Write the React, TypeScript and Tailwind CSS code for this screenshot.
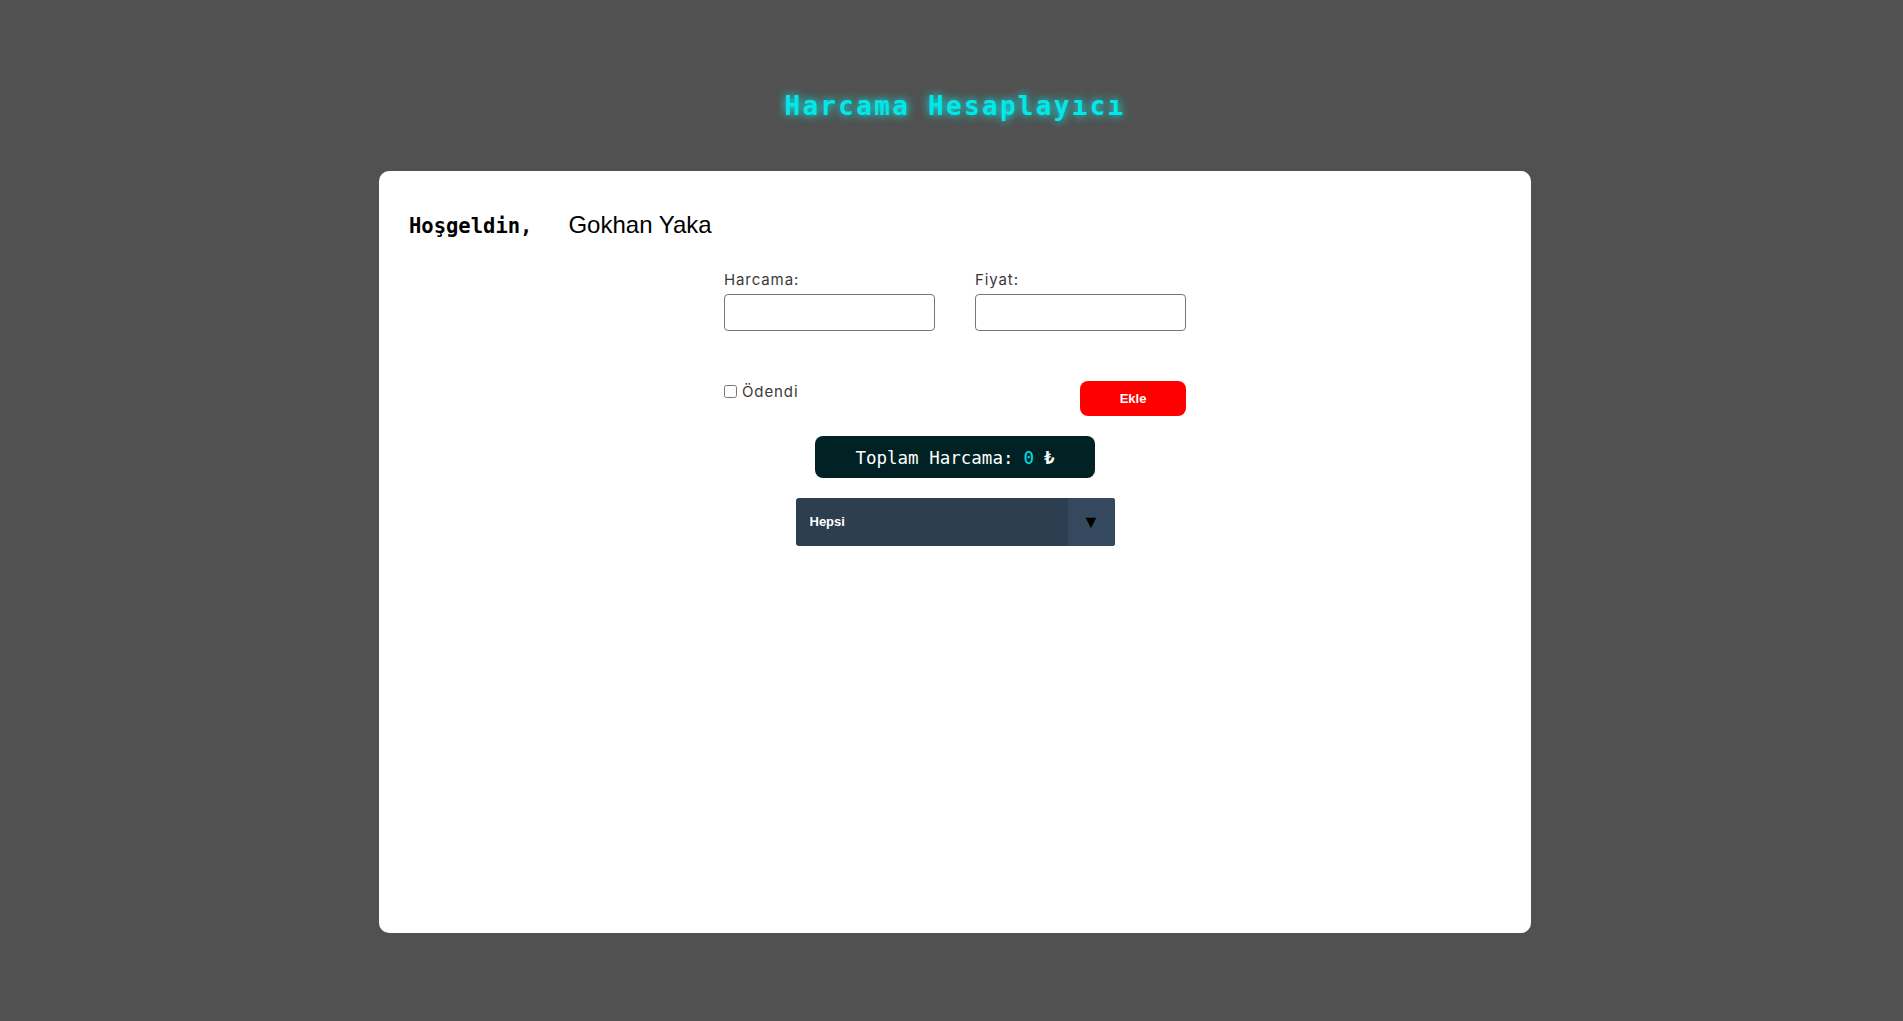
import React from "react";

export default function App() {
  return (
    <div className="min-h-screen w-full bg-[#515151] pl-[7px] pb-[88px]">
      <h1
        className="pt-[93px] text-center text-[26px] leading-none font-bold tracking-[2.3px] text-[#00e8e8] [text-shadow:0_0_10px_#00ffff]"
        style={{ fontFamily: '"DejaVu Sans Mono", monospace' }}
      >
        Harcama Hesaplayıcı
      </h1>

      <div className="mx-auto mt-[52px] h-[762px] w-[1152px] rounded-[10px] bg-white pt-[42px]">
        <div className="flex items-baseline pl-[30px]">
          <span
            className="text-[20.5px] leading-none font-bold text-black"
            style={{ fontFamily: '"DejaVu Sans Mono", monospace' }}
          >
            Hoşgeldin,
          </span>
          <span
            className="ml-[36px] text-[24px] leading-none text-black"
            style={{ fontFamily: '"Liberation Sans", Arial, sans-serif' }}
          >
            Gokhan Yaka
          </span>
        </div>

        <div
          className="mx-auto mt-[35px] w-[462px]"
          style={{ fontFamily: 'Inter, "Open Sans", sans-serif' }}
        >
          <div className="flex gap-[40px]">
            <div className="flex flex-col">
              <label className="mb-[7px] text-[15px] leading-none tracking-[0.9px] text-[#3a3a3a]">
                Harcama:
              </label>
              <input
                type="text"
                className="h-[37px] w-[211px] rounded-[4px] border border-[#767676] bg-white px-2 outline-none"
              />
            </div>
            <div className="flex flex-col">
              <label className="mb-[7px] text-[15px] leading-none tracking-[0.9px] text-[#3a3a3a]">
                Fiyat:
              </label>
              <input
                type="text"
                className="h-[37px] w-[211px] rounded-[4px] border border-[#767676] bg-white px-2 outline-none"
              />
            </div>
          </div>

          <div className="mt-[50px] flex items-start justify-between">
            <label className="flex h-[20px] items-center gap-[5px] text-[15px] leading-none tracking-[0.9px] text-[#3a3a3a]">
              <input type="checkbox" className="m-0 h-[13px] w-[13px]" />
              Ödendi
            </label>
            <button
              className="h-[35px] w-[106px] rounded-[8px] bg-[#ff0000] text-[13px] font-bold text-white"
              style={{ fontFamily: '"Liberation Sans", Arial, sans-serif' }}
            >
              Ekle
            </button>
          </div>
        </div>

        <div
          className="mx-auto mt-[20px] flex h-[42px] w-[280px] items-center justify-center rounded-[8px] bg-[#012224] pt-[3px] text-[17.5px] text-white"
          style={{ fontFamily: '"DejaVu Sans Mono", monospace' }}
        >
          Toplam Harcama: <span className="ml-[10px] text-[#00e0e8]">0</span>
          <span className="ml-[10px] font-bold">₺</span>
        </div>

        <div
          className="relative mx-auto mt-[20px] flex h-[48px] w-[319px] overflow-hidden rounded-[3px] bg-[#2c3e50]"
          style={{ fontFamily: '"Liberation Sans", Arial, sans-serif' }}
        >
          <select className="h-full flex-1 appearance-none bg-transparent pl-[14px] text-[13px] font-bold text-white outline-none">
            <option className="bg-[#2c3e50]">Hepsi</option>
            <option className="bg-[#2c3e50]">Ödendi</option>
            <option className="bg-[#2c3e50]">Ödenmedi</option>
          </select>
          <div className="pointer-events-none flex w-[47px] items-center justify-center bg-[#34495e] text-[18px] text-black">
            ▼
          </div>
        </div>
      </div>
    </div>
  );
}
